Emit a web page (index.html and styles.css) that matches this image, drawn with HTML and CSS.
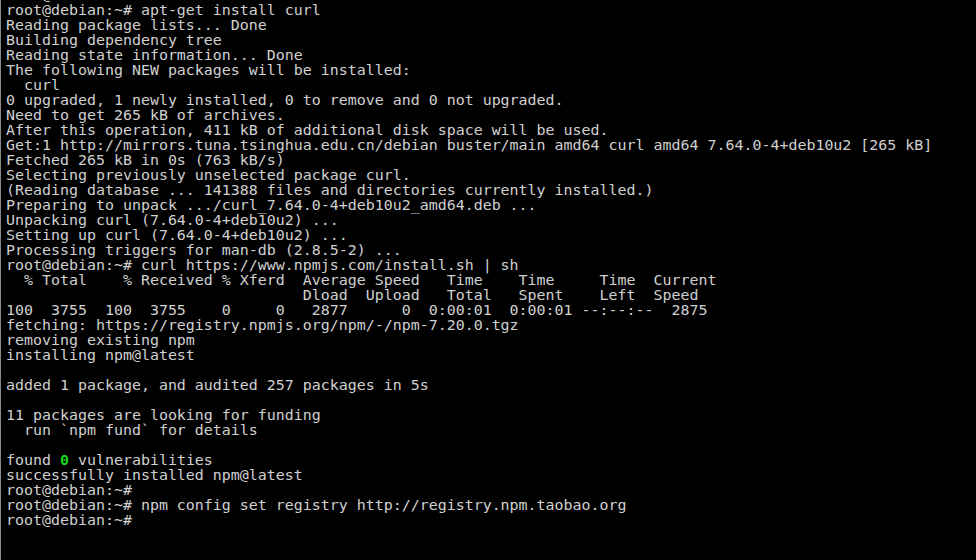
FILE: index.html
```html
<!DOCTYPE html>
<html>
<head>
<meta charset="utf-8">
<link rel="stylesheet" href="styles.css">
</head>
<body>
<div class="term">
<pre class="prev">root@debian:~#</pre>
<pre class="out">root@debian:~# apt-get install curl
Reading package lists... Done
Building dependency tree
Reading state information... Done
The following NEW packages will be installed:
  curl
0 upgraded, 1 newly installed, 0 to remove and 0 not upgraded.
Need to get 265 kB of archives.
After this operation, 411 kB of additional disk space will be used.
Get:1 http://mirrors.tuna.tsinghua.edu.cn/debian buster/main amd64 curl amd64 7.64.0-4+deb10u2 [265 kB]
Fetched 265 kB in 0s (763 kB/s)
Selecting previously unselected package curl.
(Reading database ... 141388 files and directories currently installed.)
Preparing to unpack .../curl_7.64.0-4+deb10u2_amd64.deb ...
Unpacking curl (7.64.0-4+deb10u2) ...
Setting up curl (7.64.0-4+deb10u2) ...
Processing triggers for man-db (2.8.5-2) ...
root@debian:~# curl https://www.npmjs.com/install.sh | sh
  % Total    % Received % Xferd  Average Speed   Time    Time     Time  Current
                                 Dload  Upload   Total   Spent    Left  Speed
100  3755  100  3755    0     0   2877      0  0:00:01  0:00:01 --:--:--  2875
fetching: https://registry.npmjs.org/npm/-/npm-7.20.0.tgz
removing existing npm
installing npm@latest

added 1 package, and audited 257 packages in 5s

11 packages are looking for funding
  run `npm fund` for details

found <span class="ok">0</span> vulnerabilities
successfully installed npm@latest
root@debian:~#
root@debian:~# npm config set registry http://registry.npm.taobao.org
root@debian:~#</pre>
</div>
</body>
</html>
```

FILE: styles.css
```css
html, body {
  margin: 0;
  padding: 0;
  background: #000;
  height: 100%;
  overflow: hidden;
}
.term {
  height: 560px;
  box-sizing: border-box;
  border-left: 1px solid #8a8a8a;
  padding: 3px 0 0 5px;
  background: #000;
  overflow: hidden;
}
pre {
  margin: 0;
  font-family: "DejaVu Sans Mono", "Liberation Mono", monospace;
  font-size: 14.95px;
  line-height: 15px;
  color: #d0d0d0;
  white-space: pre;
}
.prev {
  margin-top: -15px;
}
.ok {
  color: #16d816;
  font-weight: bold;
}
```
